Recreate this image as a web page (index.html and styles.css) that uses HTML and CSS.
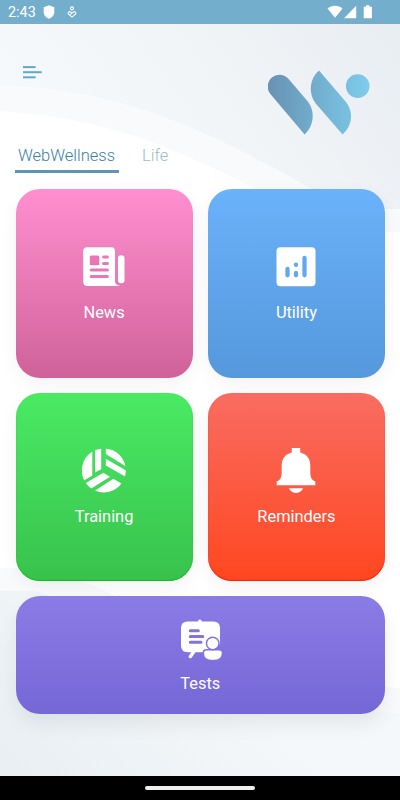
FILE: index.html
```html
<!DOCTYPE html>
<html lang="en">

<head>
    <meta charset="UTF-8">
    <meta name="viewport" content="width=device-width, initial-scale=1.0">
    <title>WebWellness</title>
    <link rel="stylesheet" href="styles.css">
</head>

<body>
    <div class="status-bar">
        <span class="time">2:43</span>
        <svg class="shield" width="12" height="14" viewBox="0 0 12 14">
            <path d="M6 0.3 L11.3 2.3 V7 C11.3 10.2 9 12.9 6 13.7 C3 12.9 0.7 10.2 0.7 7 V2.3 Z" fill="#fff"/>
        </svg>
        <svg class="person" width="10" height="12" viewBox="0 0 10 12" fill="none" stroke="#fff" stroke-width="1.1">
            <circle cx="5" cy="2.4" r="1.5"/>
            <path d="M5 7.4 L3.5 5.9 A1.6 1.6 0 0 0 1.3 8 L5 11.1 L8.7 8 A1.6 1.6 0 0 0 6.5 5.9 L3.3 8.7"/>
        </svg>
        <svg class="signals" width="46" height="14" viewBox="0 0 46 14" fill="#fff">
            <path d="M0.5 3.4 C4.8 -0.1 11.2 -0.1 15.5 3.4 L8 12.8 Z"/>
            <path d="M17 13.2 L29.2 0.8 V13.2 Z"/>
            <path d="M39 0.2 H42.5 V1.7 H44.9 V13.3 H36.7 V1.7 H39 Z"/>
        </svg>
    </div>

    <div class="screen">
        <svg class="backdrop" width="400" height="752" viewBox="0 24 400 752">
            <defs>
                <linearGradient id="sky" gradientUnits="userSpaceOnUse" x1="60" y1="220" x2="360" y2="0">
                    <stop offset="0" stop-color="#f7fafb"/>
                    <stop offset="0.5" stop-color="#f2f5f8"/>
                    <stop offset="1" stop-color="#e9eef2"/>
                </linearGradient>
                <linearGradient id="ground" gradientUnits="userSpaceOnUse" x1="0" y1="760" x2="160" y2="600">
                    <stop offset="0" stop-color="#eaeff4"/>
                    <stop offset="1" stop-color="#f4f8fa"/>
                </linearGradient>
            </defs>
            <path d="M0 24 H400 V232 H340 L252 187 C160 141 100 118 0 111 Z" fill="#f9fafc"/>
            <path d="M0 24 H400 V209 H352 L308 187 C205 128 110 86 0 86 Z" fill="url(#sky)"/>
            <path d="M0 568 H28 C60 571 90 583 113 595 C210 650 300 682 400 688 V776 H0 Z" fill="#f9fafb"/>
            <path d="M0 591 H35 L52 597 C150 650 260 709 400 713 V776 H0 Z" fill="url(#ground)"/>
        </svg>

        <div class="header">
            <svg class="menu" width="19" height="13" viewBox="0 0 19 13" fill="#65a7c6">
                <rect y="0.1" width="12.6" height="2"/>
                <rect y="5.2" width="18.7" height="2"/>
                <rect y="10.3" width="12.6" height="2"/>
            </svg>
            <svg class="logo" width="102" height="65" viewBox="268 70 102 65">
                <defs>
                    <linearGradient id="brand" gradientUnits="userSpaceOnUse" x1="268" y1="0" x2="370" y2="0">
                        <stop offset="0" stop-color="#6892b3"/>
                        <stop offset="1" stop-color="#7dcdec"/>
                    </linearGradient>
                </defs>
                <g fill="url(#brand)">
                    <path d="M270.6 94.2 A11.8 11.8 0 0 1 288.4 78.7 L307.8 101.6 C315.5 111.5 314 125.5 304.6 134.6 Z"/>
                    <path d="M319 70.6 L346 102 C353.5 111.5 353 125 342.6 134.6 L315.5 103.2 C308 93.5 309.5 78.5 319 70.6 Z"/>
                    <circle cx="357.7" cy="86.1" r="11.8"/>
                </g>
            </svg>
        </div>

        <div class="tabs">
            <div class="tab active">WebWellness</div>
            <div class="tab">Life</div>
        </div>

        <div class="cards">
            <div class="card news">
                <svg width="46" height="46" viewBox="81 243 46 46">
                    <path d="M87 247.2 H111.5 Q115 247.2 115 250.7 V282 Q115.5 284.8 120 286 H87.5 Q83.2 286 83.2 281.5 V251 Q83.2 247.2 87 247.2 Z" fill="#fff"/>
                    <rect x="118" y="255.3" width="6.5" height="28" rx="3" fill="#fff"/>
                    <rect class="cut" x="89.8" y="255.5" width="9.5" height="9.7" rx="1.5"/>
                    <path class="cut-line" d="M103.6 257 H107.4 M103.6 263.6 H107.4 M91.2 270 H107.4 M91.2 276.5 H107.4"/>
                </svg>
                <span>News</span>
            </div>
            <div class="card utility">
                <svg width="46" height="46" viewBox="273.5 243 46 46">
                    <rect x="277" y="247.2" width="39" height="39" rx="4" fill="#fff"/>
                    <path class="cut-line" d="M288 268.9 V275.3 M296.5 273 V275.3 M305 258 V275.3"/>
                    <circle class="cut" cx="296.5" cy="264.7" r="2.2"/>
                </svg>
                <span>Utility</span>
            </div>
            <div class="card training">
                <svg width="46" height="46" viewBox="81 447 46 46">
                    <defs>
                        <clipPath id="ball"><circle cx="103.8" cy="470.4" r="22"/></clipPath>
                    </defs>
                    <g clip-path="url(#ball)" fill="#fff">
                        <path d="M105.8 446 V454 L127 467.2 V446 Z M105.8 458.8 L127 471 V477.6 L105.8 465.6 Z"/>
                        <path d="M82 450 L92.3 447 V475.6 L82 481.8 Z M95 446 H101.2 V469.3 L95 472.6 Z"/>
                        <path d="M86.5 485.5 L85 483.5 L103.3 472.8 L110 476.7 L90.5 489 Z M95.2 490.5 L113.3 478.8 L123.5 484.8 L120 494 H95 Z"/>
                    </g>
                </svg>
                <span>Training</span>
            </div>
            <div class="card reminders">
                <svg width="46" height="46" viewBox="273.5 447 46 46" fill="#fff">
                    <path d="M292.3 448.1 H300.7 V452.5 C308.5 454.5 310.8 460 310.8 466 V472 C310.8 478 312.5 480 315.8 481.5 V485.2 H277.2 V481.5 C280.5 480 282.2 478 282.2 472 V466 C282.2 460 284.5 454.5 292.3 452.5 Z"/>
                    <path d="M289.3 488.3 H303.7 C301.8 491.6 299.5 493 296.5 493 C293.5 493 291.2 491.6 289.3 488.3 Z"/>
                </svg>
                <span>Reminders</span>
            </div>
            <div class="card tests">
                <svg width="46" height="46" viewBox="177 617 46 46">
                    <path d="M181 628 Q181 621.4 187.5 621.4 H198 A1.9 1.9 0 0 1 201.8 621.4 H213.5 Q220 621.4 220 628 V644 L205 652.2 H195.5 L191.8 657.4 Q190.5 659 189 657.8 Q188 657 189 655.5 L191.3 652.2 H188 Q181 652.2 181 645.5 Z" fill="#fff"/>
                    <path class="cut-line" d="M190.3 630.7 H198.3 M190.3 636.5 H202.8 M190.3 642.3 H201"/>
                    <path class="person-part" d="M206.5 650.5 H219.2 Q221.8 650.5 221.8 653 Q221.5 659.8 214.5 659.8 H211.2 Q204.2 659.8 204 653 Q204 650.5 206.5 650.5 Z"/>
                    <circle class="person-part" cx="212.7" cy="643.4" r="5.5"/>
                </svg>
                <span>Tests</span>
            </div>
        </div>
    </div>

    <div class="nav-bar">
        <div class="handle"></div>
    </div>
</body>

</html>
```
FILE: styles.css
```css
* {
    box-sizing: border-box;
}

body {
    font-family: Roboto, "Liberation Sans", sans-serif;
    display: flex;
    flex-direction: column;
    width: 400px;
    height: 800px;
    margin: 0;
    background: #fff;
    overflow: hidden;
}

svg {
    display: block;
    flex-shrink: 0;
}

.status-bar {
    height: 24px;
    padding: 0 27px 0 8px;
    display: flex;
    align-items: center;
    background: #74aecd;
    color: #fff;
}

.time {
    width: 35px;
    padding-top: 1px;
    font-size: 14.4px;
}

.person {
    margin-left: 12px;
}

.signals {
    margin-left: auto;
}

.screen {
    position: relative;
    flex: 1;
    background: #fff;
}

.backdrop {
    position: absolute;
    top: 0;
    left: 0;
}

.header {
    position: relative;
    display: flex;
    align-items: flex-start;
    justify-content: space-between;
    height: 115px;
    padding: 46px 30px 0 23px;
}

.header .menu {
    margin-top: -4px;
}

.tabs {
    position: relative;
    display: flex;
    height: 50px;
    padding-left: 15px;
}

.tab {
    height: 34px;
    padding: 7px 3px 0;
    margin-right: 20px;
    font-size: 16.5px;
    font-weight: 350;
    line-height: 20px;
    color: #9dbbcf;
    border-bottom: 3px solid transparent;
}

.tab.active {
    width: 104px;
    color: #3c7fa6;
    border-bottom-color: #5e95b7;
}

.cards {
    position: relative;
    display: grid;
    grid-template-columns: 1fr 1fr;
    grid-template-rows: 188.5px 188.5px 117.5px;
    gap: 15.2px;
    padding: 0 15px 0 15.5px;
}

.card {
    display: flex;
    flex-direction: column;
    align-items: center;
    padding-top: 54px;
    border-radius: 24px;
    box-shadow: 0 6px 18px rgba(0, 0, 0, 0.05);
    color: #fff;
    font-size: 16.4px;
    line-height: 20px;
}

.card span {
    margin-top: 14px;
}

.news {
    --cut: #ea76b5;
    background: linear-gradient(#ff8fd0, #d0629a);
}

.utility {
    --cut: #62a8ec;
    background: linear-gradient(#6ab2fa, #5598dc);
}

.training {
    background: linear-gradient(#4aea63, #38c24d);
    box-shadow: inset 0 -1px 1px #12b826, 0 6px 18px rgba(0, 0, 0, 0.05);
}

.reminders {
    background: linear-gradient(#f96c61, #ff4720);
    box-shadow: inset 0 -1px 1px #ff1c08, 0 6px 18px rgba(0, 0, 0, 0.05);
}

.tests {
    --cut: #8373df;
    grid-column: 1 / 3;
    padding-top: 21px;
    background: linear-gradient(#8b7be6, #7567d6);
    box-shadow: 0 10px 20px rgba(0, 0, 0, 0.07);
}

.tests span {
    margin-top: 10.5px;
}

.cut {
    fill: var(--cut);
}

.cut-line {
    fill: none;
    stroke: var(--cut);
    stroke-width: 3;
    stroke-linecap: round;
}

.utility .cut-line {
    stroke-width: 4.3;
}

.person-part {
    fill: #fff;
    stroke: var(--cut);
    stroke-width: 3;
    paint-order: stroke;
}

.nav-bar {
    height: 24px;
    display: flex;
    align-items: center;
    justify-content: center;
    background: #000;
}

.handle {
    width: 110px;
    height: 4px;
    border-radius: 2px;
    background: #eee;
}
```
